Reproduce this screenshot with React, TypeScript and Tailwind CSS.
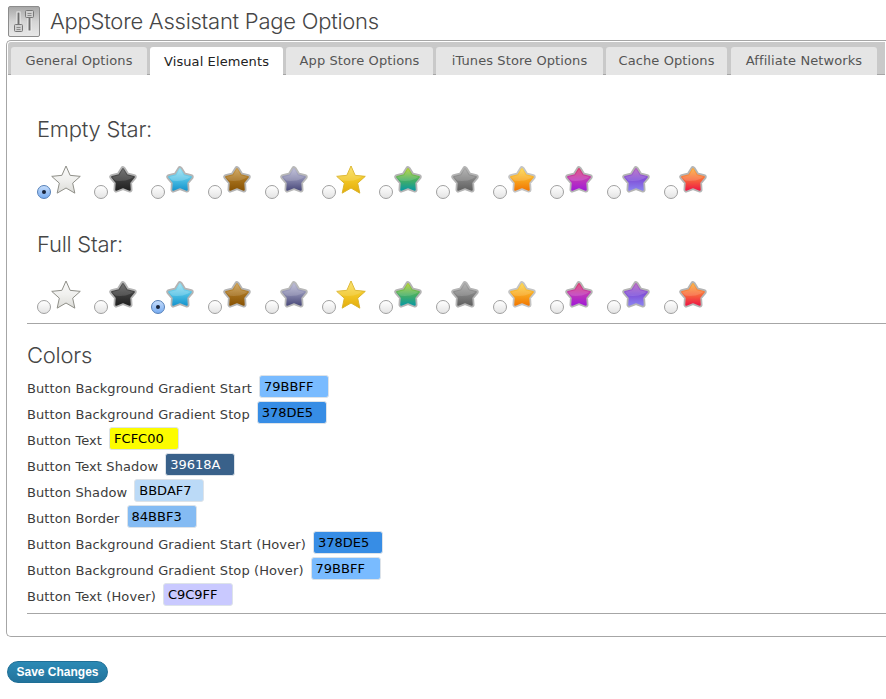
const heading = "font-['Inter','Liberation_Sans',sans-serif] font-light tracking-[-0.25px] text-[#464646]";

const tabs = [
  { label: "General Options", width: "w-[136px]", gap: "mr-[3px]" },
  { label: "Visual Elements", width: "w-[133px]", gap: "mr-[3px]", active: true },
  { label: "App Store Options", width: "w-[147px]", gap: "mr-[3px]" },
  { label: "iTunes Store Options", width: "w-[167px]", gap: "mr-[3px]" },
  { label: "Cache Options", width: "w-[121px]", gap: "mr-[4px]" },
  { label: "Affiliate Networks", width: "w-[146px]", gap: "" },
];

// empty and gold stars have no soft grey halo, and keep their points
const stars = [
  { stops: ["#fbfbfb", "#f0f0ee", "#dcdcd8"], edge: "#8f8f88", sharp: true, gloss: 0 },
  { stops: ["#5a5a5a", "#3c3c3c", "#222222"], edge: "#b4b4b4", gloss: 0.14 },
  { stops: ["#8fdcf0", "#4dbfe4", "#1a97cf"], edge: "#b4b4b4", gloss: 0.2 },
  { stops: ["#c99a4a", "#a5701c", "#8a5506"], edge: "#b4b4b4", gloss: 0.14 },
  { stops: ["#b4b4d0", "#8686ac", "#4e4e7e"], edge: "#b8b8b8", gloss: 0.14 },
  { stops: ["#f9de5a", "#f2c726", "#e4ac0c"], edge: "#dcb52a", sharp: true, gloss: 0.14 },
  { stops: ["#a8cc30", "#4ab060", "#0e9a9c"], edge: "#b4b4b4", gloss: 0.14 },
  { stops: ["#a4a4a4", "#828282", "#626262"], edge: "#b4b4b4", gloss: 0.14 },
  { stops: ["#fbd24a", "#f8a820", "#f27a04"], edge: "#c4c4c4", gloss: 0.14 },
  { stops: ["#d83a70", "#c038b8", "#a21cd4"], edge: "#b4b4b4", gloss: 0.14 },
  { stops: ["#b060c0", "#8050d8", "#8a80ee"], edge: "#b4b4b4", gloss: 0.14 },
  { stops: ["#fba83a", "#f86a3c", "#ee1c44"], edge: "#b4b4b4", gloss: 0.14 },
];

const colors = [
  { label: "Button Background Gradient Start", value: "79BBFF", swatch: "bg-[#79bbff] text-black" },
  { label: "Button Background Gradient Stop", value: "378DE5", swatch: "bg-[#378de5] text-black" },
  { label: "Button Text", value: "FCFC00", swatch: "bg-[#fcfc00] text-black" },
  { label: "Button Text Shadow", value: "39618A", swatch: "bg-[#39618a] text-white" },
  { label: "Button Shadow", value: "BBDAF7", swatch: "bg-[#bbdaf7] text-black" },
  { label: "Button Border", value: "84BBF3", swatch: "bg-[#84bbf3] text-black" },
  { label: "Button Background Gradient Start (Hover)", value: "378DE5", swatch: "bg-[#378de5] text-black" },
  { label: "Button Background Gradient Stop (Hover)", value: "79BBFF", swatch: "bg-[#79bbff] text-black" },
  { label: "Button Text (Hover)", value: "C9C9FF", swatch: "bg-[#c9c9ff] text-black" },
];

function starPath(outer: number, inner: number, cy: number) {
  const points: string[] = [];
  for (let i = 0; i < 10; i++) {
    const r = i % 2 === 0 ? outer : inner;
    const a = (Math.PI / 5) * i - Math.PI / 2;
    points.push(`${(16 + r * Math.cos(a)).toFixed(2)} ${(cy + r * Math.sin(a)).toFixed(2)}`);
  }
  return `M${points.join("L")}z`;
}

function Star({ id, index }: { id: string; index: number }) {
  const star = stars[index];
  const body = star.sharp ? starPath(15, 7, 17) : starPath(11.5, 6.6, 16.5);
  return (
    <svg width="32" height="32" viewBox="0 0 32 32" className="shrink-0">
      <defs>
        <linearGradient id={id} x1="0" y1="0" x2="0" y2="1">
          <stop offset="0" stopColor={star.stops[0]} />
          <stop offset="0.5" stopColor={star.stops[1]} />
          <stop offset="1" stopColor={star.stops[2]} />
        </linearGradient>
        <clipPath id={`${id}-clip`}>
          <path d={body} />
        </clipPath>
      </defs>
      {star.sharp ? (
        <path d={body} fill={`url(#${id})`} stroke={star.edge} strokeWidth="1" strokeLinejoin="round" />
      ) : (
        <>
          <path d={body} fill={star.edge} stroke={star.edge} strokeWidth="5.500" strokeLinejoin="round" />
          <path d={body} fill={`url(#${id})`} stroke={`url(#${id})`} strokeWidth="2" strokeLinejoin="round" />
        </>
      )}
      {star.gloss > 0 && (
        <ellipse cx="13" cy="9" rx="15" ry="8" fill="#ffffff" opacity={star.gloss} clipPath={`url(#${id}-clip)`} />
      )}
    </svg>
  );
}

function Radio({ checked }: { checked: boolean }) {
  return (
    <span
      className={`flex h-[14px] w-[14px] shrink-0 items-center justify-center rounded-full border ${
        checked ? "border-[#5580b8] bg-gradient-to-b from-[#c4dcfb] to-[#78acf0]" : "border-[#a0a0a0] bg-gradient-to-b from-[#ffffff] to-[#e4e4e4]"
      }`}
    >
      {checked && <span className="h-[4px] w-[4px] rounded-full bg-[#17233a]" />}
    </span>
  );
}

function StarRow({ name, selected }: { name: string; selected: number }) {
  return (
    <div className="flex">
      {stars.map((_, i) => (
        <div key={i} className="flex w-[57px] items-start">
          <div className="mt-[20px]">
            <Radio checked={i === selected} />
          </div>
          <div className="-mt-[1px] ml-[-1px]">
            <Star id={`${name}-${i}`} index={i} />
          </div>
        </div>
      ))}
    </div>
  );
}

function PageIcon() {
  return (
    <div className="flex h-[31px] w-[32px] items-center justify-center rounded-[2px] border border-[#8c8c8c] bg-gradient-to-b from-[#a8a8a8] via-[#d4d4d4] to-[#e8e8e8]">
      <svg width="26" height="26" viewBox="0 0 26 26" fill="none">
        <rect x="6" y="3" width="3" height="19" fill="#6e6e6e" stroke="#eeeeee" strokeWidth="1" />
        <rect x="17" y="3" width="3" height="19" fill="#6e6e6e" stroke="#eeeeee" strokeWidth="1" />
        <rect x="3.500" y="15.500" width="8" height="7" rx="1" fill="#d0d0d0" stroke="#777777" />
        <path d="M5.500 18.500h4M5.500 20.500h4" stroke="#8a8a8a" />
        <rect x="14.500" y="1.500" width="8" height="7" rx="1" fill="#d0d0d0" stroke="#777777" />
        <path d="M16.500 4.500h4M16.500 6.500h4" stroke="#8a8a8a" />
      </svg>
    </div>
  );
}

export default function App() {
  return (
    <div className="h-[699px] w-[886px] overflow-hidden bg-white font-['DejaVu_Sans',sans-serif] text-[13px] tracking-[0.1px] text-[#3c3c3c]">
      <div className="flex h-[40px] items-start pl-[8px] pt-[6px]">
        <PageIcon />
        <h1 className={`${heading} ml-[10px] mt-[-1px] text-[22px] leading-[32px]`}>AppStore Assistant Page Options</h1>
      </div>

      <div className="ml-[6px] h-[597px] rounded-bl-[5px] rounded-tl-[5px] border border-r-0 border-[#a6a6a6]">
        {/* Tabs */}
        <div className="mx-[1px] mt-[1px] flex h-[33px] rounded-tl-[3px] border-b border-[#a6a6a6] bg-[#c9c9c9] pl-[3px] pt-[5px]">
          {tabs.map((tab) => (
            <div
              key={tab.label}
              className={`${tab.width} ${tab.gap} flex items-center justify-center rounded-t-[3px] ${
                tab.active ? "z-10 h-[29px] bg-white text-[#222222]" : "h-[28px] bg-[#e5e5e5] text-[#555555]"
              }`}
            >
              {tab.label}
            </div>
          ))}
        </div>

        <div className="pl-[30px] pt-[40px]">
          <h2 className={`${heading} text-[22px] leading-[28px]`}>Empty Star:</h2>
          <div className="mt-[22px]">
            <StarRow name="empty" selected={0} />
          </div>
          <h2 className={`${heading} mt-[31px] text-[22px] leading-[28px]`}>Full Star:</h2>
          <div className="mt-[22px]">
            <StarRow name="full" selected={2} />
          </div>
        </div>

        <div className="pl-[20px]">
          <hr className="mt-[9px] border-t border-[#a6a6a6]" />
          <h2 className={`${heading} mt-[17px] text-[22px] leading-[28px]`}>Colors</h2>
          <div className="mt-[6px] flex flex-col gap-[3px]">
            {colors.map((color) => (
              <div key={color.label} className="flex h-[23px] items-center">
                <span className="mt-[5px]">{color.label}</span>
                <span
                  className={`${color.swatch} ml-[7px] flex h-[23px] w-[70px] items-center rounded-[3px] border border-[#dde3e9] pl-[4px] tracking-normal`}
                >
                  {color.value}
                </span>
              </div>
            ))}
          </div>
          <hr className="mt-[7px] border-t border-[#a6a6a6]" />
        </div>
      </div>

      <div className="ml-[7px] mt-[24px] flex h-[22px] w-[101px] items-center justify-center rounded-full border border-[#1f6f96] bg-gradient-to-b from-[#2b8ab5] to-[#22739c] font-['Liberation_Sans',sans-serif] text-[12px] font-bold tracking-normal text-white">
        Save Changes
      </div>
    </div>
  );
}
